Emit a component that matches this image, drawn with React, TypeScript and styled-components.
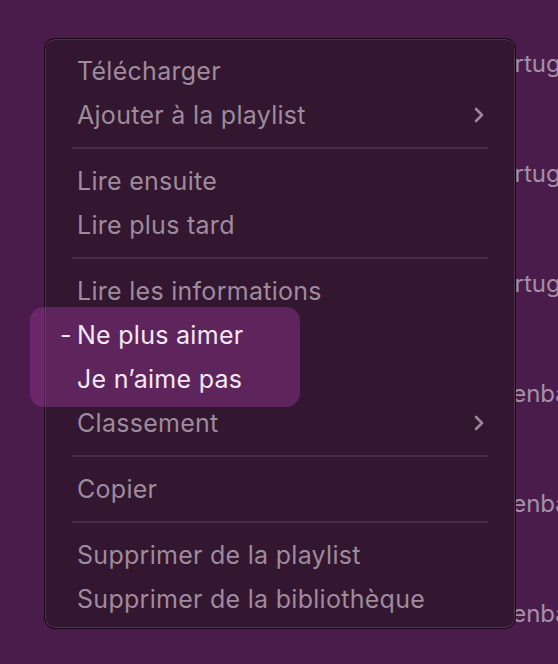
import React from "react";
import styled, { createGlobalStyle } from "styled-components";

const Global = createGlobalStyle`
  html, body { margin: 0; padding: 0; background: #4a1c4b; }
  body { font-family: Inter, "Noto Sans", "Liberation Sans", sans-serif; }
`;

const Page = styled.div`
  position: relative;
  width: 558px;
  height: 664px;
  overflow: hidden;
  background: #4a1c4b;
`;

const BackList = styled.div`
  display: flex;
  flex-direction: column;
  padding: 50px 0 0 0;
`;

const BackRow = styled.div<{ $indent: number }>`
  height: 110px;
  padding-left: ${(p) => p.$indent}px;
  font-size: 24px;
  line-height: 28px;
  color: #a48fa6;
  white-space: nowrap;
`;

const Menu = styled.div`
  position: absolute;
  left: 44px;
  top: 38px;
  width: 472px;
  height: 591px;
  box-sizing: border-box;
  border: 1px solid #160816;
  border-radius: 11px;
  background: #33162f;
  box-shadow: inset 0 0 0 1px rgba(255, 255, 255, 0.13);
  padding: 10px 0 0;
  display: flex;
  flex-direction: column;
`;

const Item = styled.div<{ $active?: boolean }>`
  position: relative;
  height: 44px;
  display: flex;
  align-items: center;
  padding: 0 28px 0 32px;
  font-size: 25px;
  letter-spacing: 0.28px;
  color: ${(p) => (p.$active ? "#f4e8f4" : "#9e8b9d")};
  z-index: 1;
`;

const Label = styled.span`
  flex: 1;
`;

const Dash = styled.span`
  position: absolute;
  left: 15px;
  color: #f4e8f4;
`;

const Separator = styled.div`
  height: 22px;
  display: flex;
  align-items: center;
  padding: 0 27px 0 27px;
  &::after {
    content: "";
    flex: 1;
    height: 2px;
    background: #4a2a47;
  }
`;

const Highlight = styled.div`
  position: absolute;
  left: -15px;
  top: 268px;
  width: 270px;
  height: 100px;
  border-radius: 14px;
  background: rgba(138, 52, 140, 0.5);
`;

const Chevron = () => (
  <svg width="12" height="16" viewBox="0 0 12 16" style={{ marginRight: 2 }}>
    <path d="M3 2 L9 8 L3 14" fill="none" stroke="#9a8899" strokeWidth="2.6" strokeLinecap="round" strokeLinejoin="round" />
  </svg>
);

type Entry = { label?: string; sub?: boolean; active?: boolean; dash?: boolean; sep?: boolean };

const entries: Entry[] = [
  { label: "Télécharger" },
  { label: "Ajouter à la playlist", sub: true },
  { sep: true },
  { label: "Lire ensuite" },
  { label: "Lire plus tard" },
  { sep: true },
  { label: "Lire les informations" },
  { label: "Ne plus aimer", active: true, dash: true },
  { label: "Je n’aime pas", active: true },
  { label: "Classement", sub: true },
  { sep: true },
  { label: "Copier" },
  { sep: true },
  { label: "Supprimer de la playlist" },
  { label: "Supprimer de la bibliothèque" },
];

const back = [
  { text: "Portugal", indent: 485 },
  { text: "Portugal", indent: 485 },
  { text: "Portugal", indent: 485 },
  { text: "Rosenbach", indent: 470 },
  { text: "Rosenbach", indent: 470 },
  { text: "Rosenbach", indent: 470 },
];

export default function App() {
  return (
    <Page>
      <Global />
      <BackList>
        {back.map((b, i) => (
          <BackRow key={i} $indent={b.indent}>
            {b.text}
          </BackRow>
        ))}
      </BackList>
      <Menu>
        <Highlight />
        {entries.map((e, i) =>
          e.sep ? (
            <Separator key={i} />
          ) : (
            <Item key={i} $active={e.active}>
              {e.dash && <Dash>-</Dash>}
              <Label>{e.label}</Label>
              {e.sub && <Chevron />}
            </Item>
          )
        )}
      </Menu>
    </Page>
  );
}
